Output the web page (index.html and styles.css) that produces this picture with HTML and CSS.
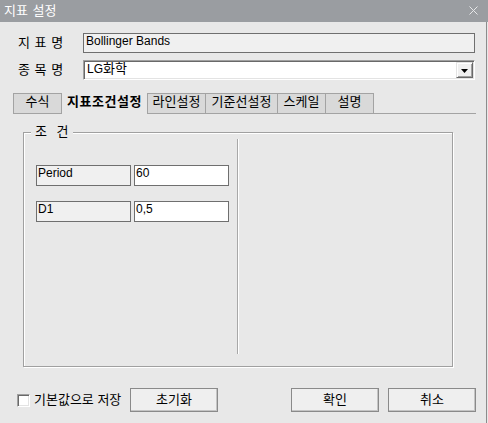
FILE: index.html
```html
<!DOCTYPE html>
<html lang="ko">
<head>
<meta charset="utf-8">
<title>지표 설정</title>
<link rel="stylesheet" href="styles.css">
</head>
<body>
<div class="window">
  <div class="titlebar">
    <span class="title">지표 설정</span>
    <svg class="close" width="9" height="9" viewBox="0 0 9 9"><path d="M0.5 0.5 L8.5 8.5 M8.5 0.5 L0.5 8.5" stroke="#e6e7e8" stroke-width="1" fill="none"/></svg>
  </div>
  <div class="content">
    <div class="row row-name">
      <span class="label">지 표 명</span>
      <div class="field readonly">Bollinger Bands</div>
    </div>
    <div class="row row-item">
      <span class="label">종 목 명</span>
      <div class="combo">
        <span class="combo-text">LG<span class="ko">화학</span></span>
        <span class="drop"><svg width="7" height="4" viewBox="0 0 7 4"><path d="M0 0 H7 L3.5 4 Z" fill="#000"/></svg></span>
      </div>
    </div>
    <div class="tabs">
      <div class="tab t1">수식</div>
      <div class="tab active">지표조건설정</div>
      <div class="tab t3">라인설정</div>
      <div class="tab t4">기준선설정</div>
      <div class="tab t5">스케일</div>
      <div class="tab t6">설명</div>
      <div class="tab-fill"></div>
    </div>
    <fieldset class="group">
      <legend>조 건</legend>
      <div class="group-inner">
        <div class="params">
          <div class="param">
            <div class="pname">Period</div>
            <div class="pval">60</div>
          </div>
          <div class="param">
            <div class="pname">D1</div>
            <div class="pval">0,5</div>
          </div>
        </div>
        <div class="divider"></div>
        <div class="right"></div>
      </div>
    </fieldset>
    <div class="footer">
      <label class="check"><span class="box"></span><span class="check-text">기본값으로 저장</span></label>
      <button class="btn">초기화</button>
      <button class="btn ok">확인</button>
      <button class="btn cancel">취소</button>
    </div>
  </div>
</div>
</body>
</html>
```

FILE: styles.css
```css
html, body {
  margin: 0;
  padding: 0;
  background: #e8e8e8;
}
body {
  width: 488px;
  height: 423px;
  overflow: hidden;
  font-family: "Liberation Sans", "Noto Sans CJK KR", sans-serif;
  font-size: 12px;
  color: #000;
}
.window {
  width: 488px;
  height: 423px;
  background: #e8e8e8;
}
.titlebar {
  height: 22px;
  background: #9a9da1;
  display: flex;
  align-items: center;
  justify-content: space-between;
  padding: 0 10px 0 4px;
  box-sizing: border-box;
}
.title {
  color: #fff;
  font-size: 13px;
  line-height: 22px;
  word-spacing: 1px;
}
.close {
  display: block;
  margin-top: -1px;
}
.content {
  width: 487px;
  height: 401px;
  box-sizing: border-box;
  border-right: 1px solid #8c8c8c;
  padding-top: 11px;
}
.row {
  display: flex;
  align-items: center;
  padding-left: 18px;
}
.row-item {
  margin-top: 7px;
}
.label {
  width: 65px;
  font-size: 13px;
  line-height: 14px;
  word-spacing: 1px;
}
.field {
  width: 392px;
  height: 20px;
  box-sizing: border-box;
  border: 1px solid #6f6f6f;
  background: #f0f0f0;
  padding: 0 2px;
  line-height: 14px;
}
.combo {
  width: 392px;
  height: 20px;
  box-sizing: border-box;
  background: #fff;
  border-top: 1px solid #a0a0a0;
  border-left: 1px solid #a0a0a0;
  border-bottom: 1px solid #fff;
  border-right: 1px solid #fff;
  box-shadow: inset 1px 1px 0 #696969, inset -1px -1px 0 #e3e3e3;
  display: flex;
  align-items: flex-start;
  padding: 1px 1px 1px 3px;
}
.combo-text {
  flex: 1;
  line-height: 14px;
}
.ko {
  font-size: 13px;
}
.drop {
  width: 17px;
  height: 16px;
  box-sizing: border-box;
  background: #f0f0f0;
  border-top: 1px solid #e3e3e3;
  border-left: 1px solid #e3e3e3;
  border-right: 1px solid #696969;
  border-bottom: 1px solid #696969;
  box-shadow: inset 1px 1px 0 #fff, inset -1px -1px 0 #a0a0a0;
  display: flex;
  align-items: center;
  justify-content: center;
}
.drop svg {
  display: block;
  margin-top: 1px;
}
.tabs {
  display: flex;
  margin: 13px 0 0 13px;
  width: 463px;
  height: 21px;
  font-size: 13px;
}
.tab {
  height: 21px;
  box-sizing: border-box;
  background: #d9d9d9;
  border: 1px solid #a3a3a3;
  text-align: center;
  line-height: 16px;
}
.t1 { width: 49px; }
.active {
  width: 85px;
  background: transparent;
  border: none;
  font-weight: bold;
  letter-spacing: 0.5px;
  line-height: 18px;
}
.t3 { width: 59px; }
.t4 { width: 73px; margin-left: -1px; }
.t5 { width: 49px; margin-left: -1px; }
.t6 { width: 49px; margin-left: -1px; }
.tab-fill {
  flex: 1;
  height: 21px;
  box-sizing: border-box;
  border-bottom: 1px solid #a3a3a3;
}
.group {
  margin: 11px 0 0 23px;
  padding: 0;
  width: 430px;
  box-sizing: border-box;
  border: 1px solid #a0a0a0;
  box-shadow: 1px 1px 0 #fff, inset 1px 1px 0 #fff;
  min-width: 0;
}
.group legend {
  margin-left: 7px;
  padding: 0 4px;
  font-size: 13px;
  line-height: 14px;
  word-spacing: 6px;
  background: #e8e8e8;
}
.group-inner {
  display: flex;
  height: 227px;
}
.params {
  width: 213px;
  box-sizing: border-box;
  padding: 26px 0 0 12px;
  display: flex;
  flex-direction: column;
  gap: 15px;
}
.param {
  display: flex;
  gap: 3px;
}
.pname, .pval {
  width: 95px;
  height: 21px;
  box-sizing: border-box;
  border: 1px solid #6f6f6f;
  padding: 0 1px;
  line-height: 14px;
}
.pname { background: #f0f0f0; }
.pval { background: #fff; }
.divider {
  width: 1px;
  background: #a8a8a8;
  border-right: 1px solid #fff;
  margin-bottom: 12px;
}
.right { flex: 1; }
.footer {
  display: flex;
  align-items: center;
  height: 24px;
  margin-top: 21px;
  padding: 0 10px 0 17px;
  font-size: 13px;
}
.check {
  width: 113px;
  display: flex;
  align-items: center;
}
.box {
  width: 13px;
  height: 13px;
  box-sizing: border-box;
  background: #fff;
  border-top: 1px solid #a0a0a0;
  border-left: 1px solid #a0a0a0;
  border-bottom: 1px solid #fff;
  border-right: 1px solid #fff;
  box-shadow: inset 1px 1px 0 #696969, inset -1px -1px 0 #e3e3e3;
}
.check-text {
  margin-left: 4px;
  line-height: 14px;
}
.btn {
  width: 88px;
  height: 24px;
  box-sizing: border-box;
  border: 1px solid #8a8a8a;
  box-shadow: inset -1px -1px 0 #c4c4c4;
  background: #efefef;
  font: inherit;
  color: #000;
  padding: 0;
  line-height: 14px;
}
.ok { margin-left: auto; }
.cancel { margin-left: 9px; }
```
